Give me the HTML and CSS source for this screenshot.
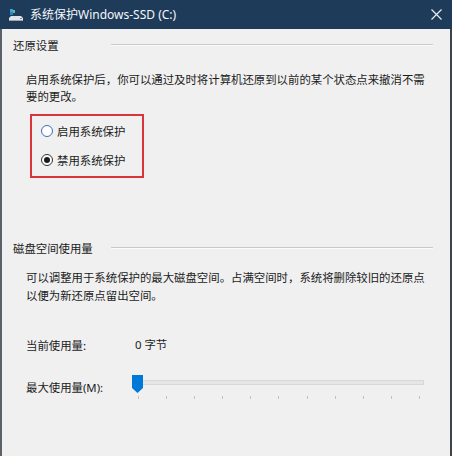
FILE: index.html
```html
<!DOCTYPE html>
<html lang="zh-CN">

<head>
    <meta charset="UTF-8">
    <meta name="viewport" content="width=device-width, initial-scale=1.0">
    <title>系统保护Windows-SSD (C:)</title>
    <link rel="stylesheet" href="styles.css">
</head>

<body>
    <div class="window">
        <header class="titlebar">
            <svg class="title-icon" width="14" height="13" viewBox="0 0 14 13">
                <rect x="1" y="0" width="3" height="3" fill="#3fa0e6" />
                <rect x="4" y="1" width="2" height="3" fill="#5cc08a" />
                <rect x="1" y="3" width="3" height="3" fill="#2f7fc4" />
                <path d="M2 7 L12 7 L14 9 L14 12 L0 12 L0 9 Z" fill="#dfe4e8" />
                <rect x="0" y="11" width="14" height="1" fill="#9aa5ae" />
                <rect x="11" y="9" width="2" height="1" fill="#7a8a96" />
            </svg>
            <span class="title">系统保护Windows-SSD (C:)</span>
            <svg class="close" width="11" height="11" viewBox="0 0 11 11">
                <path d="M0.5 0.5 L10.5 10.5 M10.5 0.5 L0.5 10.5" stroke="#e8edf2" stroke-width="1.2" />
            </svg>
        </header>

        <main class="content">
            <section class="group">
                <div class="group-head">
                    <span>还原设置</span>
                    <i class="rule rule-wide"></i>
                </div>
                <p class="desc">启用系统保护后，你可以通过及时将计算机还原到以前的某个状态点来撤消不需<br>要的更改。</p>
                <div class="choice-box">
                    <label class="radio">
                        <span class="dot dot-focus"></span>启用系统保护
                    </label>
                    <label class="radio">
                        <span class="dot dot-on"></span>禁用系统保护
                    </label>
                </div>
            </section>

            <section class="group usage">
                <div class="group-head">
                    <span>磁盘空间使用量</span>
                    <i class="rule"></i>
                </div>
                <p class="desc desc-tall">可以调整用于系统保护的最大磁盘空间。占满空间时，系统将删除较旧的还原点<br>以便为新还原点留出空间。</p>

                <div class="stat-row">
                    <span class="stat-label">当前使用量:</span>
                    <span class="stat-value">0 字节</span>
                </div>

                <div class="slider-row">
                    <span class="stat-label slider-label">最大使用量(M):</span>
                    <div class="slider">
                        <div class="track"></div>
                        <div class="ticks">
                            <i></i><i></i><i></i><i></i><i></i><i></i><i></i><i></i><i></i><i></i><i></i>
                        </div>
                        <span class="thumb"></span>
                    </div>
                </div>
            </section>
        </main>
    </div>
</body>

</html>
```

FILE: styles.css
```css
:root {
    --color-title: #1e3c5a;
    --color-panel: #f0f0f0;
    --color-text: #1b1b1b;
    --color-accent: #0078d7;
    --color-alert: #da343c;
}

body {
    margin: 0;
    padding: 0;
    font-family: "Noto Sans", "Noto Sans CJK SC", sans-serif;
    color: var(--color-text);
}

.window {
    width: 452px;
    height: 456px;
    display: flex;
    flex-direction: column;
    overflow: hidden;
}

.titlebar {
    height: 29px;
    flex: none;
    display: flex;
    align-items: center;
    background-color: var(--color-title);
    color: #f4f7fa;
    padding-left: 9px;
}

.title-icon {
    margin-top: 1px;
}

.title {
    margin-left: 7px;
    font-size: 12px;
    line-height: 16px;
}

.close {
    margin-left: auto;
    margin-right: 10px;
}

.content {
    flex: 1;
    background-color: var(--color-panel);
    border-left: 2px solid #5b6168;
    border-right: 2px solid #3e4348;
    padding: 0 17px 0 11px;
    font-family: "Noto Sans CJK SC", sans-serif;
    font-size: 11.4px;
}

.group-head {
    display: flex;
    align-items: center;
    height: 16px;
    line-height: 16px;
    margin-top: 8px;
}

.rule {
    flex: 1;
    height: 1px;
    margin-left: 18px;
    background-color: #c9c9c9;
    border-bottom: 1px solid #fbfbfb;
}

.rule-wide {
    margin-left: 52px;
}

.desc {
    margin: 18px 0 0 13px;
    line-height: 17px;
    white-space: nowrap;
}

.desc-tall {
    margin-top: 12px;
    line-height: 18px;
}

.choice-box {
    box-sizing: border-box;
    width: 114px;
    margin: 9px 0 0 17px;
    padding: 5px 0 6px 9px;
    border: 2px solid var(--color-alert);
    display: flex;
    flex-direction: column;
    gap: 9px;
}

.radio {
    display: flex;
    align-items: center;
    height: 20px;
    line-height: 20px;
    gap: 4px;
}

.dot {
    box-sizing: border-box;
    width: 12px;
    height: 12px;
    border-radius: 50%;
    border: 1px solid #333;
    background-color: #fff;
    display: flex;
    align-items: center;
    justify-content: center;
}

.dot-focus {
    border-color: #3d6fb6;
}

.dot-on::after {
    content: "";
    width: 6px;
    height: 6px;
    border-radius: 50%;
    background-color: #1b1b1b;
}

.usage .group-head {
    margin-top: 62px;
}

.stat-row {
    display: flex;
    margin: 33px 0 0 13px;
    height: 16px;
    line-height: 16px;
}

.stat-label {
    width: 109px;
    flex: none;
}

.stat-value {
    font-family: "Noto Sans", "Noto Sans CJK SC", sans-serif;
}

.slider-row {
    display: flex;
    align-items: flex-start;
    margin: 22px 0 0 13px;
    height: 26px;
}

.slider-label {
    width: 106px;
    line-height: 16px;
    padding-top: 5px;
    font-family: "Noto Sans", "Noto Sans CJK SC", sans-serif;
}

.slider {
    position: relative;
    width: 292px;
    height: 26px;
}

.track {
    box-sizing: border-box;
    height: 5px;
    margin: 5px 0 0 3px;
    background-color: #e6e6e6;
    border: 1px solid #d8d8d8;
}

.ticks {
    display: flex;
    justify-content: space-between;
    width: 282px;
    margin: 11px 0 0 6px;
    height: 3px;
}

.ticks i {
    width: 1px;
    height: 3px;
    background-color: #c2c2c2;
}

.thumb {
    position: absolute;
    left: 0;
    top: 0;
    width: 11px;
    height: 18px;
    background-color: var(--color-accent);
    clip-path: polygon(0 0, 100% 0, 100% 72%, 50% 100%, 0 72%);
}
```
